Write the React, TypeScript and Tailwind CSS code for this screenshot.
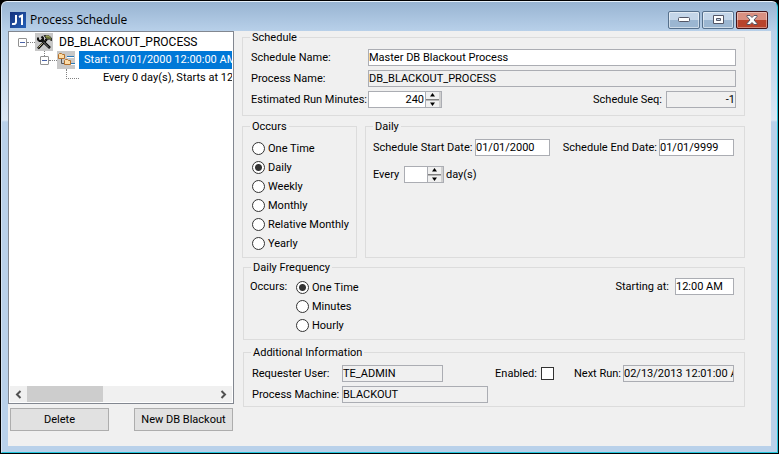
import type { ReactNode } from "react";

const field =
  "h-[17px] min-w-0 rounded-none border border-[#abadb3] text-[11px] leading-none text-black outline-none";

function Group({
  title,
  className = "",
  children,
}: {
  title: string;
  className?: string;
  children: ReactNode;
}) {
  return (
    <fieldset className={`min-w-0 border border-[#dcdcdc] ${className}`}>
      <legend className="ml-[7px] px-0.5 leading-[13px]">{title}</legend>
      {children}
    </fieldset>
  );
}

function Radio({ name, label, checked = false }: { name: string; label: string; checked?: boolean }) {
  return (
    <label className="flex h-[19px] items-center gap-[3px] leading-[19px] whitespace-nowrap">
      <input
        type="radio"
        name={name}
        defaultChecked={checked}
        className="size-[13px] shrink-0 appearance-none rounded-full border border-[#333] bg-white checked:bg-[radial-gradient(circle,#333_3px,#fff_4px)]"
      />
      {label}
    </label>
  );
}

function Spinner({ id, value, className }: { id: string; value: string; className: string }) {
  return (
    <div className={`flex h-[17px] border border-[#abadb3] bg-white ${className}`}>
      <input id={id} defaultValue={value} className="min-w-0 flex-1 px-px text-right text-[11px] leading-none outline-none" />
      <div className="flex w-4 flex-col border-r-2 border-l border-r-[#d0d0d0] border-l-[#abadb3] bg-[#f0f0f0]">
        <button type="button" aria-label="Increase" className="flex flex-1 items-center justify-center border-b border-[#808080]">
          <svg width="7" height="4" viewBox="0 0 7 4">
            <path d="M3.500 0L6 3.500H1z" />
          </svg>
        </button>
        <button type="button" aria-label="Decrease" className="flex flex-1 items-center justify-center border-t border-[#b8b8b8]">
          <svg width="7" height="4" viewBox="0 0 7 4">
            <path d="M1 .5h5L3.500 4z" />
          </svg>
        </button>
      </div>
    </div>
  );
}

function Collapse() {
  return (
    <button
      type="button"
      aria-label="Collapse"
      className="flex size-[9px] shrink-0 items-center justify-center rounded-[1px] border border-[#919191] bg-white"
    >
      <span className="h-px w-[5px] bg-[#4b63a7]" />
    </button>
  );
}

function ToolsIcon() {
  return (
    <svg className="size-[18px] shrink-0 bg-[#c8c8c8]" viewBox="0 0 18 18" fill="none">
      <path d="M3 15.500L12 6" stroke="#000" strokeWidth="2.500" />
      <path d="M3.500 14.500L10 7.500" stroke="#d8d0a0" strokeWidth="1" />
      <path d="M6 6.500l9 8.500" stroke="#000" strokeWidth="2.500" />
      <path d="M8 8.500l6 6" stroke="#8c8c8c" strokeWidth="1" />
      <path d="M3 4.500v2l1.500 1.500h2L8 6.500V5L6.500 3.500" stroke="#111" strokeWidth="2" />
      <path d="M9 2.500h4.500L16.500 5v3l-2-2-2.500.5z" fill="#6c7434" stroke="#333" />
      <path d="M11 3h2.500l1.500 1.500" stroke="#b5b96a" />
    </svg>
  );
}

function ScheduleIcon() {
  return (
    <svg className="size-[18px] shrink-0 bg-[#c8c8c8]" viewBox="0 0 18 18" fill="none">
      <path d="M4.500 8v4.500h3" stroke="#555" />
      <path d="M10 5.500h7M14 12.500h4" stroke="#2b7ab8" />
      <path d="M10 6.500h7M14 13.500h4" stroke="#fff" />
      <path d="M1.500 3.500l1-1h2l1 1h2v4h-6zM7.500 9.500l1-1h2l1 1h2v4h-6z" fill="#fbdca8" stroke="#b5702a" />
    </svg>
  );
}

function TitleBar() {
  const glass =
    "flex h-[18px] w-8 items-center justify-center rounded-[2px] border border-[#56708c] bg-linear-to-b from-[#c4d6e9] from-50% to-[#9bb6d1] to-50% shadow-[inset_0_0_0_1px_#ffffff80]";
  return (
    <header className="flex h-[29px] items-center pt-1.5 pr-[3px] pl-0.5">
      <svg width="16" height="16" viewBox="0 0 16 16" aria-hidden="true">
        <defs>
          <linearGradient id="logo" x2="1" y2="1">
            <stop stopColor="#15317c" />
            <stop offset="1" stopColor="#2460b8" />
          </linearGradient>
        </defs>
        <rect width="16" height="16" fill="url(#logo)" />
        <path d="M6 3v7q0 2.500-4 2M9 5l3-1.500V13" fill="none" stroke="#fff" strokeWidth="2" />
      </svg>
      <h1 className="ml-1 flex-1 font-['Open_Sans',sans-serif] text-xs">Process Schedule</h1>
      <div className="flex gap-0.5">
        <button type="button" aria-label="Minimize" className={glass}>
          <svg width="12" height="5" viewBox="0 0 12 5">
            <rect x=".5" y=".5" width="11" height="4" rx="1" fill="#fff" stroke="#535666" />
          </svg>
        </button>
        <button type="button" aria-label="Maximize" className={glass}>
          <svg width="11" height="9" viewBox="0 0 11 9">
            <path d="M.5.5h10v8H.5zM3.500 3.500v2h4v-2z" fill="#fff" fillRule="evenodd" stroke="#535666" />
          </svg>
        </button>
        <button
          type="button"
          aria-label="Close"
          className="flex h-[18px] w-8 items-center justify-center rounded-[2px] border border-[#43141a] bg-linear-to-b from-[#d99081] from-50% to-[#b8432c] to-50% shadow-[inset_0_0_0_1px_#ffffff60]"
        >
          <svg width="12" height="10" viewBox="0 0 12 10">
            <path d="M1 .5h3l2 2 2-2h3v1L8 5l3 3.500v1H8l-2-2-2 2H1v-1L4 5 1 1.500z" fill="#fff" stroke="#535666" />
          </svg>
        </button>
      </div>
    </header>
  );
}

function Tree() {
  const dots = "shrink-0 border-dotted border-[#808080]";
  return (
    <div className="flex flex-1 flex-col overflow-hidden border border-[#828790] bg-white">
      <ul className="flex-1 overflow-hidden pt-px pr-px whitespace-nowrap">
        <li>
          <div className="flex h-[18px] items-center pl-[9px]">
            <Collapse />
            <span className={`w-2 border-t ${dots}`} />
            <ToolsIcon />
            <span className="pl-1.5 text-xs">DB_BLACKOUT_PROCESS</span>
          </div>
          <ul>
            <li>
              <div className="flex h-[18px] items-center pl-[31px]">
                <div className="flex shrink-0 flex-col items-center self-start">
                  <span className={`h-[5px] border-l ${dots}`} />
                  <Collapse />
                </div>
                <span className={`w-2 border-t ${dots}`} />
                <ScheduleIcon />
                <span className="ml-1 min-w-0 flex-1 overflow-hidden bg-[#0078d7] pl-[5px] leading-[18px] text-white">
                  Start: 01/01/2000 12:00:00 AM
                </span>
              </div>
              <ul>
                <li className="flex h-[18px] pl-[57px]">
                  <span className={`mr-6 h-2.5 w-[13px] border-b border-l ${dots}`} />
                  <span className="min-w-0 flex-1 overflow-hidden leading-[18px]">Every 0 day(s), Starts at 12:00:00 AM</span>
                </li>
              </ul>
            </li>
          </ul>
        </li>
      </ul>
      <div className="mx-px mb-px flex h-4 items-center bg-[#f0f0f0]">
        <button type="button" aria-label="Scroll left" className="flex w-[17px] justify-center">
          <svg width="7" height="9" viewBox="0 0 7 9" fill="none" stroke="#505050" strokeWidth="2">
            <path d="M5.500 1L2 4.500 5.500 8" />
          </svg>
        </button>
        <span className="h-full w-19 bg-[#cdcdcd]" />
        <button type="button" aria-label="Scroll right" className="ml-auto flex w-[17px] justify-center">
          <svg width="7" height="9" viewBox="0 0 7 9" fill="none" stroke="#505050" strokeWidth="2">
            <path d="M1.500 1L5 4.500 1.500 8" />
          </svg>
        </button>
      </div>
    </div>
  );
}

export default function App() {
  const button = "h-[23px] w-[99px] border border-[#adadad] bg-[#e1e1e1] text-center";
  return (
    <div className="flex min-h-screen bg-black p-px font-[Roboto,'Liberation_Sans',sans-serif] text-[11px] leading-[17px] text-black">
      <div className="flex flex-1 flex-col rounded-t-md border border-t-[#e6f0fa] border-r-[#25c5dc] border-b-[#25c5dc] border-l-[#d5e4f3] bg-[linear-gradient(#98b4d2,#b9d1ea_30px,#dbe7f4_118px,#b9d1ea_120px)] px-1.5 pb-1.5">
        <TitleBar />
        <main className="flex flex-1 gap-2 bg-[#f0f0f0]">
          <aside className="flex w-[226px] shrink-0 flex-col pb-[15px]">
            <Tree />
            <div className="mt-1 flex justify-between pr-px pl-0.5">
              <button type="button" className={button}>Delete</button>
              <button type="button" className={button}>New DB Blackout</button>
            </div>
          </aside>

          <form className="min-w-0 flex-1 pr-[26px]">
            <Group title="Schedule" className="pb-[7px]">
              <div className="grid grid-cols-[117px_1fr] items-center gap-y-1 pt-[5px] pr-2 pl-2">
                <label htmlFor="name">Schedule Name:</label>
                <input id="name" defaultValue="Master DB Blackout Process" className={`${field} bg-white`} />
                <label htmlFor="process">Process Name:</label>
                <input id="process" readOnly value="DB_BLACKOUT_PROCESS" className={`${field} bg-[#f0f0f0]`} />
                <label htmlFor="minutes">Estimated Run Minutes:</label>
                <div className="flex items-center">
                  <Spinner id="minutes" value="240" className="w-[74px]" />
                  <label htmlFor="seq" className="mr-1 ml-auto">Schedule Seq:</label>
                  <input id="seq" readOnly value="-1" className={`${field} w-[70px] bg-[#f0f0f0] text-right`} />
                </div>
              </div>
            </Group>

            <div className="mt-1 flex gap-2">
              <Group title="Occurs" className="w-[115px] pb-1">
                <div className="pt-1.5 pl-[9px]">
                  <Radio name="occurs" label="One Time" />
                  <Radio name="occurs" label="Daily" checked />
                  <Radio name="occurs" label="Weekly" />
                  <Radio name="occurs" label="Monthly" />
                  <Radio name="occurs" label="Relative Monthly" />
                  <Radio name="occurs" label="Yearly" />
                </div>
              </Group>
              <Group title="Daily" className="flex-1">
                <div className="flex items-center pt-1.5 pr-2.5 pl-[7px] whitespace-nowrap">
                  <label htmlFor="start" className="w-[102px]">Schedule Start Date:</label>
                  <input id="start" defaultValue="01/01/2000" className={`${field} w-[75px] bg-white`} />
                  <label htmlFor="end" className="mr-0.5 ml-auto">Schedule End Date:</label>
                  <input id="end" defaultValue="01/01/9999" className={`${field} w-[75px] bg-white`} />
                </div>
                <div className="mt-2.5 flex items-center pl-[7px]">
                  <label htmlFor="every" className="w-[31px]">Every</label>
                  <Spinner id="every" value="" className="w-10" />
                  <span className="ml-0.5">day(s)</span>
                </div>
              </Group>
            </div>

            <Group title="Daily Frequency" className="mt-[3px] ml-px pb-1">
              <div className="flex items-start pt-1 pr-2.5 pl-1.5">
                <span className="w-[46px]">Occurs:</span>
                <div>
                  <Radio name="frequency" label="One Time" checked />
                  <Radio name="frequency" label="Minutes" />
                  <Radio name="frequency" label="Hourly" />
                </div>
                <div className="ml-auto flex items-center">
                  <label htmlFor="time" className="mr-1.5">Starting at:</label>
                  <input id="time" defaultValue="12:00 AM" className={`${field} w-[59px] bg-white`} />
                </div>
              </div>
            </Group>

            <Group title="Additional Information" className="mt-1.5 ml-px pb-[3px]">
              <div className="flex flex-col gap-1 pt-1.5 pr-2.5 pl-2">
                <div className="flex items-center">
                  <label htmlFor="user" className="w-[90px]">Requester User:</label>
                  <input id="user" readOnly value="TE_ADMIN" className={`${field} w-[101px] bg-[#f0f0f0]`} />
                  <label htmlFor="enabled" className="mr-1 ml-auto">Enabled:</label>
                  <input id="enabled" type="checkbox" className="size-[13px] appearance-none border border-[#333] bg-white" />
                  <label htmlFor="next" className="mr-0.5 ml-5">Next Run:</label>
                  <input id="next" readOnly value="02/13/2013 12:01:00 AM" className={`${field} w-[111px] bg-[#f0f0f0]`} />
                </div>
                <div className="flex items-center">
                  <label htmlFor="machine" className="w-[90px]">Process Machine:</label>
                  <input id="machine" readOnly value="BLACKOUT" className={`${field} w-[146px] bg-[#f0f0f0]`} />
                </div>
              </div>
            </Group>
          </form>
        </main>
      </div>
    </div>
  );
}
